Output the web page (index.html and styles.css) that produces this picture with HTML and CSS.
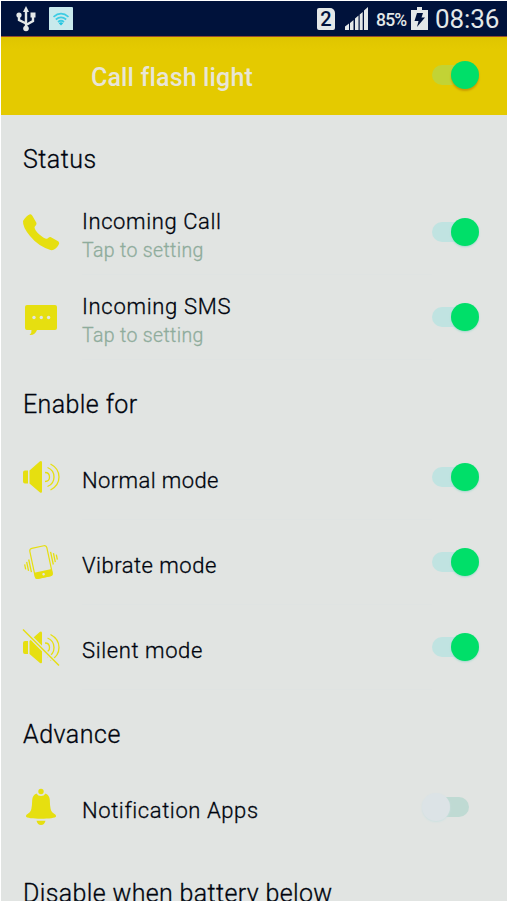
FILE: index.html
```html
<!DOCTYPE html>
<html lang="en">
<head>
<meta charset="utf-8">
<title>Call flash light</title>
<link rel="stylesheet" href="styles.css">
</head>
<body>
<div class="screen">
  <div class="statusbar">
    <svg class="usb" width="20" height="26" viewBox="0 0 20 26" fill="none" stroke="#e4e8e8" stroke-width="2.400"><path d="M10 4V22M10 17.500L3 14V9M10 19L17 15V9"/><g fill="#e4e8e8" stroke="none"><path d="M10 0l3 6H7z"/><circle cx="10" cy="22.500" r="2.800"/><circle cx="3" cy="9" r="2.600"/><path d="M14.500 6.500h5v5h-5z"/></g></svg>
    <svg class="wifi" width="24" height="24" viewBox="0 0 24 24"><path fill="#c8e9ec" d="M0 1q0-1 1-1h22q1 0 1 1v22H0z"/><g fill="none" stroke="#3dcce3" stroke-width="1.700"><path d="M4.500 9.800Q12 3.500 19.500 9.800M6.800 12.500Q12 8.200 17.200 12.500M9 15Q12 12.500 15 15"/></g><path fill="#20c4df" d="M9.800 16.200q2.200-1.800 4.400 0L12 18.500z"/></svg>
    <span class="spacer"></span>
    <span class="sim">2</span>
    <svg class="signal" width="23" height="24" viewBox="0 0 23 24" fill="#e4e8e8"><path d="M0 23v-3.500l4-3V23zM5 23v-7l3.500-3v10zM10 23V11.500l3.500-3V23zM14.700 23V7.500l3-2.500v18zM19 23V3.500L23 0v23z"/></svg>
    <span class="percent">85%</span>
    <svg class="battery" width="17" height="24" viewBox="0 0 17 24"><path fill="#e4e8e8" d="M6 0h5v3h6v20H0V3h6z"/><path fill="#00123b" d="M6 6h6l-1.500 4.500H14L6 20l1.500-6H3.500z"/></svg>
    <span class="clock">08:36</span>
  </div>
  <header class="appbar"><h1>Call flash light</h1><span class="toggle on"></span></header>
  <main>
    <h2>Status</h2>
    <div class="row two">
      <svg class="icon" viewBox="0 0 38 38"><path fill="#e6df10" d="M1 8Q4 3 8 1.300Q9.500 1 10.500 3L14.500 10Q15 11.500 12.500 14Q12.500 17.500 18 22Q23 26.500 25.500 25.500Q28 23.500 29 24.200L36.500 28.500Q38 30 36.500 32Q33 38 28.500 37Q16 33 8 23Q.5 14 1 8z"/></svg>
      <div class="label"><span class="incoming-call">Incoming Call</span><small>Tap to setting</small></div><span class="toggle on"></span>
    </div>
    <div class="row two">
      <svg class="icon sms" viewBox="0 0 38 38"><path fill="#e6df10" d="M6 4h27q2 0 2 2v21q0 2-2 2H15Q13 34.500 7.500 34Q10 31.500 9.500 29H5q-2 0-2-2V6q0-2 2-2z"/><g fill="#e1e4e2"><circle cx="12" cy="16.500" r="1.700"/><circle cx="19.300" cy="16.500" r="1.700"/><circle cx="26.600" cy="16.500" r="1.700"/></g></svg>
      <div class="label"><span class="incoming-sms">Incoming SMS</span><small>Tap to setting</small></div><span class="toggle on"></span>
    </div>
    <h2 class="enable">Enable for</h2>
    <div class="row">
      <svg class="icon" viewBox="0 0 38 38"><g fill="#e6df10"><path d="M3 12.500h3v13H3q-2 0-2-2v-9q0-2 2-2zM7.500 12.500L18 3.300q2-1 2 1.200v29q0 2-2 1L7.500 25.500z"/></g><g fill="none" stroke="#e6df10" stroke-width="1.300"><path d="M23 14.500q4.500 0 4.500 4.500T23 23.500M25.500 9.500q6.500 2.500 6.500 9.500t-6.500 9.500M28.500 6Q37 10.500 37 19T28.500 32"/></g></svg>
      <div class="label"><span class="normal">Normal mode</span></div><span class="toggle on"></span>
    </div>
    <div class="row">
      <svg class="icon" viewBox="0 0 38 38"><g transform="rotate(-12 19 19)"><rect x="10.300" y="3.700" width="17.400" height="30.600" rx="2.500" fill="none" stroke="#e6df10" stroke-width="1.200"/><path fill="#e6df10" d="M10 28h18v4.500q0 2.500-2.500 2.500h-13Q10 35 10 32.500z"/><circle cx="19" cy="31.500" r="1.300" fill="#e1e4e2"/><g fill="none" stroke="#e6df10" stroke-width="1.300"><path d="M7.500 14v13M5 16v9M2.500 18v5M30.500 11v13M33 13v9M35.500 15v5"/></g></g></svg>
      <div class="label"><span class="vibrate">Vibrate mode</span></div><span class="toggle on"></span>
    </div>
    <div class="row">
      <svg class="icon" viewBox="0 0 38 38"><g fill="#e6df10"><path d="M3 13h3v13H3q-2 0-2-2v-9q0-2 2-2zM7.500 13L18 3.800q2-1 2 1.200v29q0 2-2 1L7.500 26z"/></g><g fill="none" stroke="#e6df10" stroke-width="1.300"><path d="M23 15q4.500 0 4.500 4.500T23 24M25.500 10q6.500 2.500 6.500 9.500t-6.500 9.500M28.500 6.500Q37 11 37 19.500T28.500 32.500"/></g><path stroke="#e1e4e2" stroke-width="4" d="M1 1.500l36 36"/><path stroke="#e6df10" stroke-width="1.400" d="M1 1.500l36 36"/></svg>
      <div class="label"><span class="silent">Silent mode</span></div><span class="toggle on"></span>
    </div>
    <h2 class="advance">Advance</h2>
    <div class="row last">
      <svg class="icon bell" viewBox="0 0 38 38"><g fill="#e6df10"><circle cx="19" cy="3.500" r="2.700"/><path d="M14.500 5.500q1.500 2.500 4.500 2.500t4.500-2.500q4 1.500 4.300 6.500Q28 23 30.500 24.500Q34 26.500 34 28.500C34 31.500 4 31.500 4 28.500Q4 26.500 7.500 24.500Q10 23 10.200 12Q10.500 7 14.500 5.500zM14.500 32.800h9q-1 4.200-4.500 4.200t-4.500-4.200z"/></g></svg>
      <div class="label"><span class="notification">Notification Apps</span></div><span class="toggle off"></span>
    </div>
    <h2 class="disable">Disable when battery below</h2>
  </main>
</div>
</body>
</html>
```
FILE: styles.css
```css
* { box-sizing: border-box; }
body { margin: 0; background: #fff; font-family: Roboto, "Liberation Sans", sans-serif; color: #00040e; overflow: hidden; }
.screen { height: 901px; padding: 1px 0 0 1px; overflow: hidden; }
.statusbar { height: 36px; display: flex; align-items: center; background: #00123b; border-bottom: 1px solid #954b2e; color: #e4e8e8; padding: 0 8px 0 15px; }
.statusbar svg { flex: none; }
.wifi { margin-left: 13px; }
.spacer { flex: 1; }
.sim { width: 18px; height: 22px; background: #e4e8e8; color: #00123b; font-size: 20px; line-height: 23px; font-weight: 500; text-align: center; border-radius: 2px 5px 2px 2px; margin-right: 10px; }
.percent { width: 31px; margin-left: 8px; padding-top: 2px; font-size: 17.500px; font-weight: 500; letter-spacing: -.8px; white-space: nowrap; }
.battery { margin-left: 4px; }
.clock { width: 64px; margin-left: 7px; font-size: 26px; line-height: 34px; letter-spacing: -.1px; white-space: nowrap; }
.appbar { height: 78px; background: linear-gradient(#dfc500, #e4ca00 12px); padding-left: 90px; display: flex; align-items: flex-start; justify-content: space-between; }
h1 { margin: 26px 0 0; font-size: 25px; line-height: 30px; font-weight: 500; letter-spacing: .15px; color: #e8e5d6; }
main { height: 786px; background: #e1e4e2; overflow: hidden; }
h2 { margin: 0; height: 75px; padding: 30px 0 0 22px; font-size: 25px; line-height: 30px; font-weight: 300; letter-spacing: .5px; white-space: nowrap; -webkit-text-stroke: .3px; }
.enable { letter-spacing: .4px; }
.disable { padding-top: 29px; letter-spacing: .36px; }
.row { height: 85px; display: flex; align-items: flex-start; position: relative; }
.icon { width: 38px; height: 38px; margin: 23px 0 0 21px; flex: none; }
.sms { margin-top: 26px; }
.label { flex: 1; height: 85px; margin-left: 22px; padding-top: 32px; display: flex; flex-direction: column; border-bottom: 1px solid #dfe3e2; font-size: 22px; line-height: 28px; letter-spacing: .6px; font-weight: 300; white-space: nowrap; -webkit-text-stroke: .3px; }
.two .label { padding-top: 18px; }
.label span { align-self: flex-start; }
.normal { letter-spacing: .4px; }
.vibrate { letter-spacing: .5px; }
.incoming-sms { letter-spacing: .7px; }
small { font-size: 19.500px; line-height: 28px; font-weight: 300; color: #8fac9c; letter-spacing: .35px; padding-top: 1px; }
.toggle { width: 48px; height: 28px; margin: 28px 27px 0 0; position: relative; flex: none; }
.toggle::before { content: ""; position: absolute; left: 0; top: 4px; width: 38px; height: 20px; border-radius: 10px; background: #c0e3e1; }
.toggle::after { content: ""; position: absolute; right: .7px; top: 0; width: 28.400px; height: 28.400px; border-radius: 50%; background: #00df69; box-shadow: 0 1px 2px #a3d8cf; }
.appbar .toggle { margin-top: 24px; }
.appbar .toggle::before { background: #c2d335; }
.appbar .toggle::after { box-shadow: 0 2px 2px #c99d00; }
.off { margin-right: 37px; }
.toggle.off::before { left: 9px; background: #bfdad3; }
.toggle.off::after { left: 0; background: #dce3e6; box-shadow: 0 1px 2px #cee1e2; }
.last .label { border: 0; }
```
